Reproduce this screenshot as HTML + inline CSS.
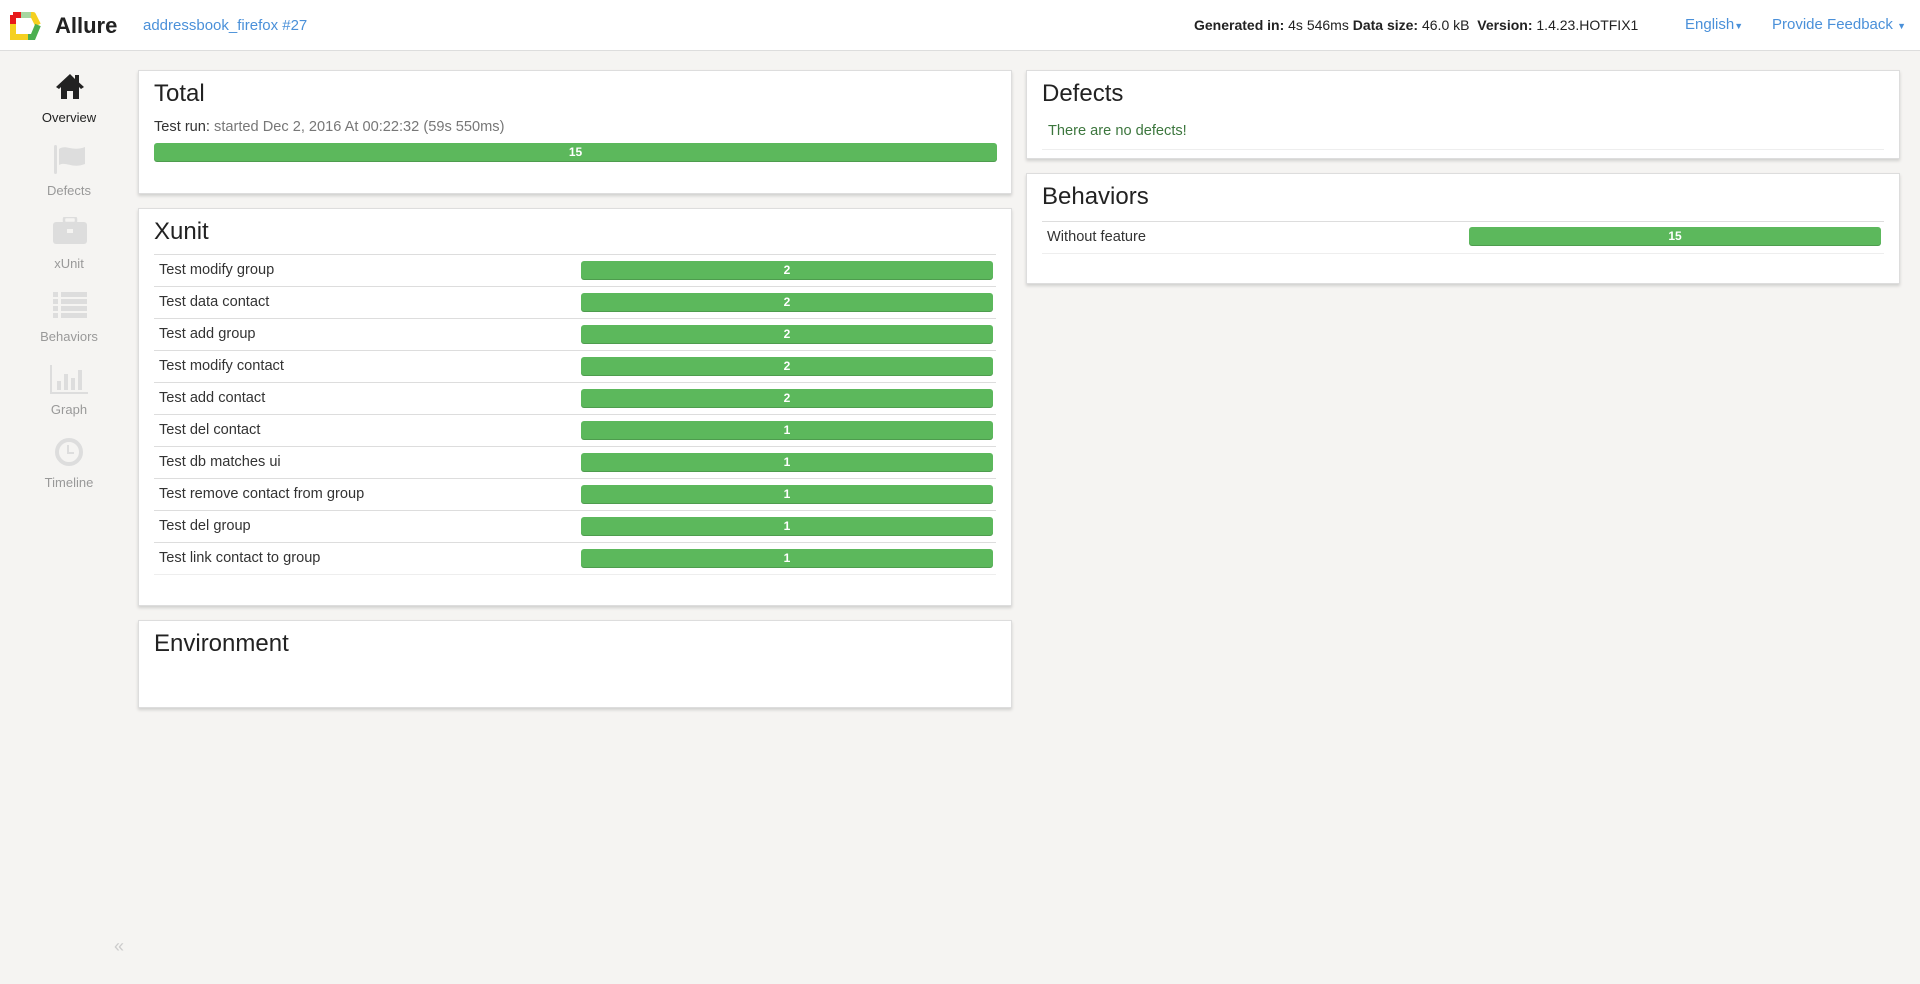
<!DOCTYPE html>
<html><head><meta charset="utf-8"><style>
*{box-sizing:border-box;margin:0;padding:0}
body{width:1920px;height:984px;background:#f5f4f2;font-family:"Liberation Sans",sans-serif;color:#333;position:relative;overflow:hidden}
.hdr{position:absolute;left:0;top:0;width:1920px;height:51px;background:#fff;border-bottom:1px solid #ddd}
.abs{position:absolute;white-space:nowrap}
.panel{position:absolute;background:#fff;border:1px solid #ddd;box-shadow:0 2px 3px rgba(0,0,0,.15)}
.panel h2{position:absolute;left:15px;top:9px;font-size:24px;font-weight:normal;color:#222}
.bar{position:absolute;background:#5cb85c;border-radius:3px;color:#fff;font-size:12px;font-weight:bold;text-align:center;line-height:19px;height:19px;box-shadow:inset 0 -1px 0 rgba(0,0,0,.15)}
.row{position:absolute;left:15px;right:15px;height:32px;border-top:1px solid #ddd;font-size:14.6px;line-height:31px;padding-left:5px}
.nav{position:absolute;left:0;width:138px;text-align:center;font-size:13px;color:#999}
</style></head><body>
<div class="hdr"></div>
<svg class="abs" style="left:9px;top:11px" width="34" height="30" viewBox="0 0 34 30">
<path d="M4 4 H12" stroke="#e8191b" stroke-width="6" fill="none"/>
<path d="M4 4 V13" stroke="#e8191b" stroke-width="6" fill="none"/>
<path d="M12 4 H22" stroke="#a6d6a0" stroke-width="6" fill="none"/>
<path d="M22 4 H24 L29 14" stroke="#f5d020" stroke-width="6" fill="none" stroke-linejoin="round"/>
<path d="M4 13 V26 H20" stroke="#f5d020" stroke-width="6" fill="none"/>
<path d="M29 14 L24 26 H19" stroke="#4caf50" stroke-width="6" fill="none"/>
</svg>
<div class="abs" style="left:55px;top:13px;font-size:22px;font-weight:bold;color:#222">Allure</div>
<div class="abs" style="left:143px;top:17px;font-size:15px;color:#4a90d9">addressbook_firefox #27</div>
<div class="abs" style="left:1194px;top:17px;font-size:14px;color:#222"><b>Generated in:</b> 4s 546ms <b>Data size:</b> 46.0 kB &nbsp;<b>Version:</b> 1.4.23.HOTFIX1</div>
<div class="abs" style="left:1685px;top:16px;font-size:15px;color:#4a90d9">English<span style="font-size:9px">▼</span></div>
<div class="abs" style="left:1772px;top:16px;font-size:15px;color:#4a90d9">Provide Feedback <span style="font-size:9px">▼</span></div>

<svg class="abs" style="left:55px;top:73px" width="30" height="26" viewBox="0 0 30 26"><path d="M15 1 L1 14 L4 16 L6 14 V26 H12 V18 H18 V26 H24 V14 L26 16 L29 14 L24 9.5 V2 H20 V6 Z" fill="#222"/></svg>
<div class="nav" style="top:110px;color:#222">Overview</div>
<svg class="abs" style="left:54px;top:144px" width="34" height="30" viewBox="0 0 34 30"><rect x="0" y="1" width="3" height="29" rx="1.5" fill="#ddd"/><path d="M5 5 C12 0 18 8 31 3 V20 C18 25 12 17 5 21 Z" fill="#ddd"/></svg>
<div class="nav" style="top:183px">Defects</div>
<svg class="abs" style="left:53px;top:217px" width="34" height="28" viewBox="0 0 34 28"><rect x="0" y="5" width="34" height="22" rx="3" fill="#ddd"/><rect x="11" y="0" width="12" height="6" rx="2" fill="none" stroke="#ddd" stroke-width="2.5"/><rect x="14" y="12" width="6" height="4" fill="#f5f4f2"/></svg>
<div class="nav" style="top:256px">xUnit</div>
<svg class="abs" style="left:53px;top:292px" width="34" height="26" viewBox="0 0 34 26"><g fill="#ddd"><rect x="0" y="0" width="5" height="5"/><rect x="8" y="0" width="26" height="5"/><rect x="0" y="7" width="5" height="5"/><rect x="8" y="7" width="26" height="5"/><rect x="0" y="14" width="5" height="5"/><rect x="8" y="14" width="26" height="5"/><rect x="0" y="21" width="5" height="5"/><rect x="8" y="21" width="26" height="5"/></g></svg>
<div class="nav" style="top:329px">Behaviors</div>
<svg class="abs" style="left:50px;top:365px" width="38" height="29" viewBox="0 0 38 29"><g fill="#ddd"><rect x="0" y="0" width="2" height="29"/><rect x="0" y="27" width="38" height="2"/><rect x="7" y="16" width="4" height="9"/><rect x="14" y="9" width="4" height="16"/><rect x="21" y="13" width="4" height="12"/><rect x="28" y="5" width="4" height="20"/></g></svg>
<div class="nav" style="top:402px">Graph</div>
<svg class="abs" style="left:54px;top:437px" width="30" height="30" viewBox="0 0 30 30"><circle cx="15" cy="15" r="12" fill="none" stroke="#ddd" stroke-width="4"/><path d="M14 8 V16 H20" stroke="#ddd" stroke-width="2" fill="none"/></svg>
<div class="nav" style="top:475px">Timeline</div>
<div class="abs" style="left:114px;top:936px;font-size:18px;color:#ccc">«</div>

<div class="panel" style="left:138px;top:70px;width:874px;height:124px">
<h2>Total</h2>
<div class="abs" style="left:15px;top:48px;font-size:14.6px;color:#777"><span style="color:#333">Test run:</span> started Dec 2, 2016 At 00:22:32 (59s 550ms)</div>
<div class="bar" style="left:15px;top:72px;width:843px">15</div>
</div>

<div class="panel" style="left:138px;top:208px;width:874px;height:398px">
<h2>Xunit</h2>
<div class="row" style="top:45px">Test modify group<div class="bar" style="left:427px;top:6px;width:412px">2</div></div>
<div class="row" style="top:77px">Test data contact<div class="bar" style="left:427px;top:6px;width:412px">2</div></div>
<div class="row" style="top:109px">Test add group<div class="bar" style="left:427px;top:6px;width:412px">2</div></div>
<div class="row" style="top:141px">Test modify contact<div class="bar" style="left:427px;top:6px;width:412px">2</div></div>
<div class="row" style="top:173px">Test add contact<div class="bar" style="left:427px;top:6px;width:412px">2</div></div>
<div class="row" style="top:205px">Test del contact<div class="bar" style="left:427px;top:6px;width:412px">1</div></div>
<div class="row" style="top:237px">Test db matches ui<div class="bar" style="left:427px;top:6px;width:412px">1</div></div>
<div class="row" style="top:269px">Test remove contact from group<div class="bar" style="left:427px;top:6px;width:412px">1</div></div>
<div class="row" style="top:301px">Test del group<div class="bar" style="left:427px;top:6px;width:412px">1</div></div>
<div class="row" style="top:333px">Test link contact to group<div class="bar" style="left:427px;top:6px;width:412px">1</div></div>
<div class="abs" style="left:15px;right:15px;top:365px;border-top:1px solid #eee"></div>
</div>

<div class="panel" style="left:138px;top:620px;width:874px;height:88px">
<h2>Environment</h2>
</div>

<div class="panel" style="left:1026px;top:70px;width:874px;height:89px">
<h2>Defects</h2>
<div class="abs" style="left:21px;top:52px;font-size:14.6px;color:#3c763d">There are no defects!</div>
<div class="abs" style="left:15px;right:15px;top:78px;border-top:1px solid #eee"></div>
</div>

<div class="panel" style="left:1026px;top:173px;width:874px;height:111px">
<h2>Behaviors</h2>
<div class="row" style="top:47px">Without feature<div class="bar" style="left:427px;top:5px;width:412px">15</div></div>
<div class="abs" style="left:15px;right:15px;top:79px;border-top:1px solid #eee"></div>
</div>
</body></html>
